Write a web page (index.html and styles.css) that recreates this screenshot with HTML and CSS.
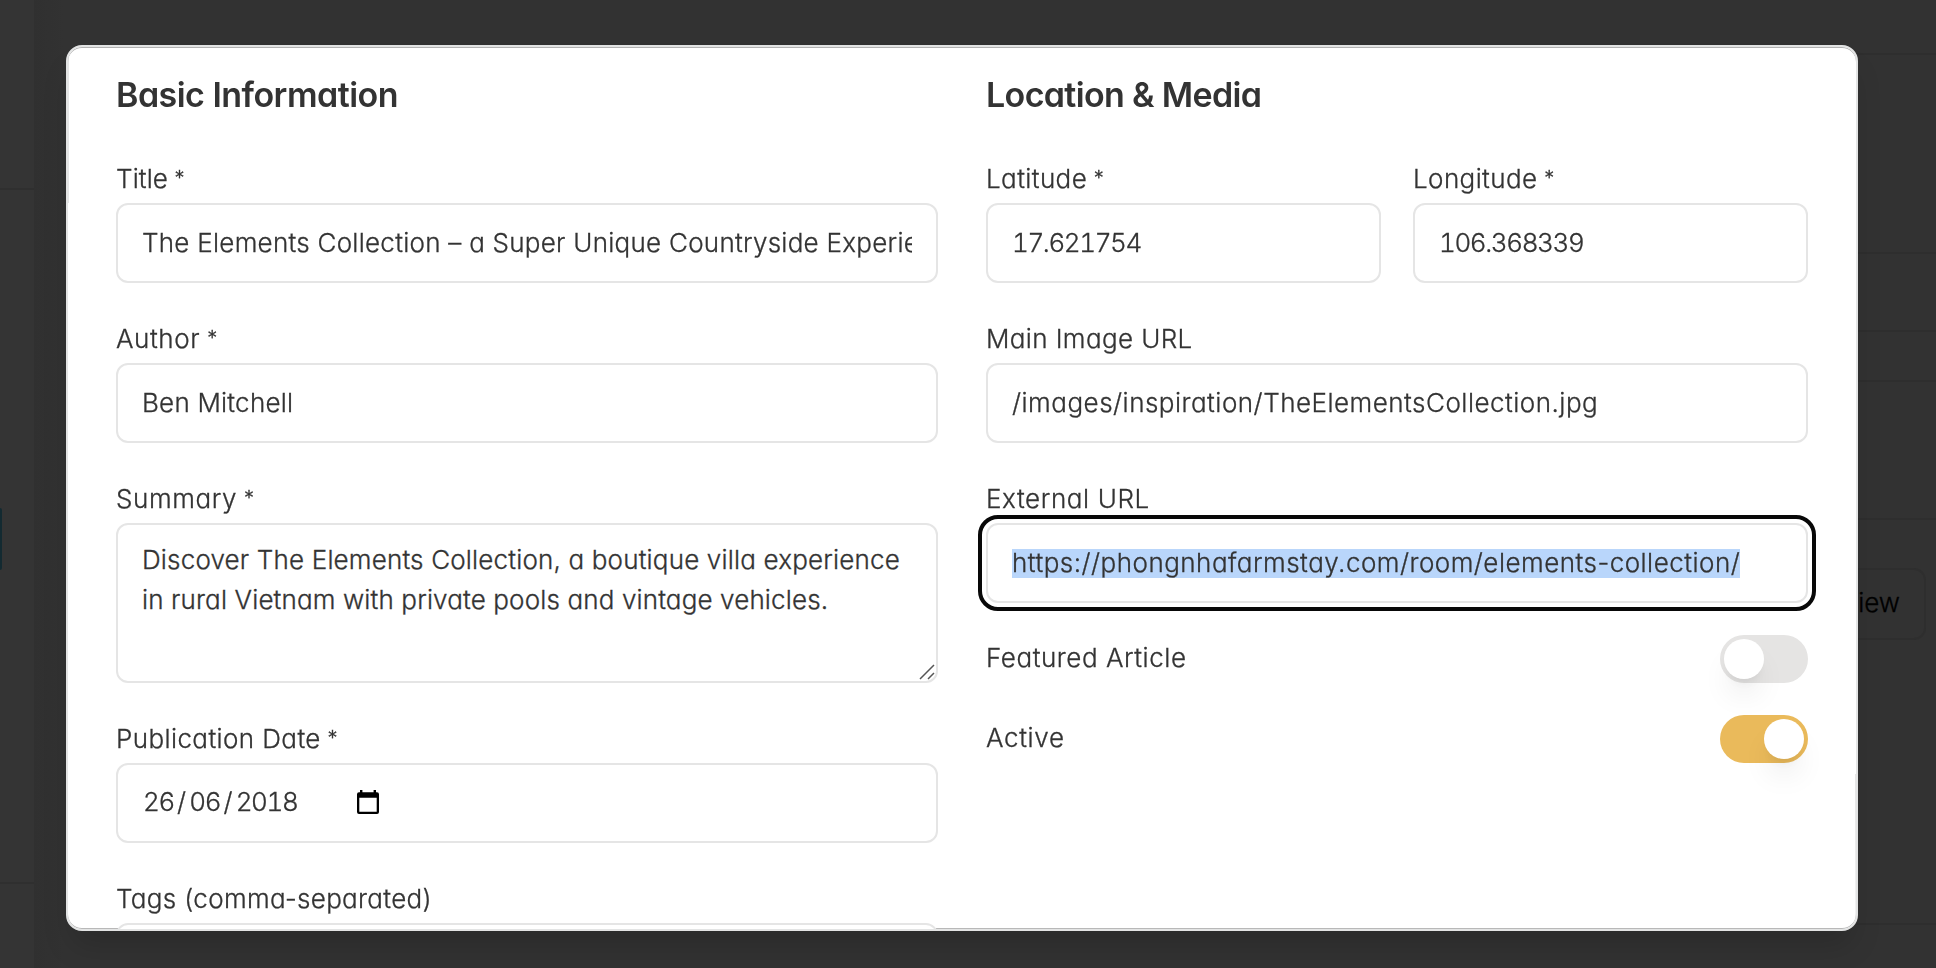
FILE: index.html
```html
<!DOCTYPE html>
<html lang="en">
<head>
<meta charset="utf-8">
<title>Edit article</title>
<link rel="stylesheet" href="styles.css">
</head>
<body>
<div class="page">
  <aside class="side">
    <div class="side-top"></div>
    <div class="side-nav"><div class="side-active"></div></div>
  </aside>
  <main class="main">
    <div class="row row-a"></div>
    <div class="row row-b"></div>
    <div class="row row-c"></div>
    <div class="row row-d"></div>
    <div class="row row-e"></div>
    <div class="row row-f"><div class="view-btn">View</div></div>
  </main>
</div>
<div class="overlay">
  <div class="modal">
    <section class="col">
      <h2 class="heading h-basic">Basic Information</h2>
      <div class="fields">
        <div class="field"><div class="label l-title">Title <span class="star">*</span></div><div class="input"><span class="clip v-title">The Elements Collection – a Super Unique Countryside Experience</span></div></div>
        <div class="field"><div class="label l-author">Author <span class="star">*</span></div><div class="input"><span class="clip v-author">Ben Mitchell</span></div></div>
        <div class="field"><div class="label l-summary">Summary <span class="star">*</span></div>
          <div class="input area"><span class="v-line1">Discover The Elements Collection, a boutique villa experience</span><span class="v-line2">in rural Vietnam with private pools and vintage vehicles.</span>
            <svg class="grip" width="16" height="16" viewBox="0 0 16 16"><path d="M1 15 15 1M9 15l6-6" stroke="#555" stroke-width="1.5" fill="none"/></svg>
          </div></div>
        <div class="field"><div class="label l-date">Publication Date <span class="star">*</span></div>
          <div class="input date"><span class="num">26</span><span class="sep">/</span><span class="num">06</span><span class="sep">/</span><span class="num">2018</span>
            <svg class="cal" width="22" height="24" viewBox="0 0 22 24"><path fill-rule="evenodd" d="M3 0h2.4v2.3h11.2V0H19v2.3h1q2 0 2 2V22q0 2-2 2H2q-2 0-2-2V4.3q0-2 2-2h1zM2.3 7.8v13.9h17.4V7.8z"/></svg>
          </div></div>
        <div class="field"><div class="label l-tags">Tags (comma-separated)</div><div class="input"></div></div>
      </div>
    </section>
    <section class="col">
      <h2 class="heading h-loc">Location &amp; Media</h2>
      <div class="fields">
        <div class="pair">
          <div class="field"><div class="label l-lat">Latitude <span class="star">*</span></div><div class="input"><span class="num">17.621754</span></div></div>
          <div class="field"><div class="label l-lat">Longitude <span class="star">*</span></div><div class="input"><span class="num">106.368339</span></div></div>
        </div>
        <div class="field"><div class="label l-image">Main Image URL</div><div class="input"><span class="clip v-image">/images/inspiration/TheElementsCollection.jpg</span></div></div>
        <div class="field"><div class="label l-url">External URL</div><div class="input focused"><span class="selected">https://phongnhafarmstay.com/room/elements-collection/</span></div></div>
      </div>
      <div class="switch-row"><span class="l-featured">Featured Article</span><div class="switch"><div class="thumb"></div></div></div>
      <div class="switch-row"><span class="l-active">Active</span><div class="switch on"><div class="thumb"></div></div></div>
    </section>
  </div>
</div>
</body>
</html>
```
FILE: styles.css
```css
* { box-sizing: border-box; }
body {
  margin: 0;
  height: 968px;
  overflow: hidden;
  background: #323232;
  color: #333;
  font: 300 26px/32px Inter, "Noto Sans", sans-serif;
  font-feature-settings: "cv11";
  -webkit-text-stroke: .3px currentColor;
}

/* dimmed page behind the dialog */
.page { display: flex; height: 968px; }
.side { width: 34px; background: #343434; }
.side-top { height: 190px; border-bottom: 2px solid #2f2f2f; }
.side-nav { height: 694px; padding-top: 318px; border-bottom: 2px solid #2f2f2f; }
.side-active { width: 2px; height: 62px; background: #132a31; border-radius: 0 2px 2px 0; }
.main { flex: 1; background: linear-gradient(90deg, #303030, #323232 30px); }
.row { width: 90px; margin-left: auto; border-bottom: 2px solid #2e2e2e; }
.row-a { height: 55px; }
.row-b { height: 199px; }
.row-c { height: 78px; }
.row-d { height: 50px; }
.row-e { height: 138px; }
.row-f { height: 405px; padding: 48px 10px 0 0; display: flex; justify-content: flex-end; align-items: flex-start; }
.view-btn { flex: none; width: 120px; height: 72px; padding: 17px 24px 0 0; text-align: right; border: 2px solid #2e2e2e; border-radius: 12px; color: #000; }

.overlay { position: fixed; inset: 0; padding: 45px 78px 0 66px; }
.modal {
  display: grid;
  grid-template-columns: 1fr 1fr;
  gap: 48px;
  height: 886px;
  padding: 27px 48px 0;
  overflow: hidden;
  border: 2px solid #e3e4e4;
  border-radius: 16px;
  background:
    linear-gradient(#e5e5e5, #e5e5e5) 0 0 / 1px 156px no-repeat,
    linear-gradient(#e5e5e5, #f4f4f4) 100% 727px / 1px 156px no-repeat,
    #fff;
  box-shadow: inset 0 1px 0 #b2b2b2, inset 0 -1px 0 #b8b8b8, 0 20px 30px -6px rgba(0, 0, 0, .15);
}
.col { min-width: 0; }
.heading { margin: 0 0 48px; height: 41px; padding-top: 1px; font-size: 34px; line-height: 40px; font-weight: 600; white-space: nowrap; -webkit-text-stroke: 0; }
.fields { display: flex; flex-direction: column; gap: 40px; }
.pair { display: grid; grid-template-columns: 1fr 1fr; gap: 32px; }
.label { height: 40px; white-space: nowrap; }
.star { font-size: 20px; line-height: 1; vertical-align: 3px; letter-spacing: 0; margin-left: -1px; }
.input {
  display: flex;
  align-items: center;
  height: 80px;
  padding: 0 24px;
  border: 2px solid #e5e5e5;
  border-radius: 12px;
  background: #fff;
  white-space: nowrap;
}
.clip { overflow: hidden; }
.area { position: relative; display: block; height: 160px; padding: 15px 24px; line-height: 40px; }
.area span { display: block; }
.grip { position: absolute; right: 1px; bottom: 1px; }
.num { font-feature-settings: "tnum"; letter-spacing: -1.4px; }
.date { padding: 0 25px 3px; }
.sep { width: 15.5px; text-align: center; }
.cal { margin: 1px 0 0 60px; }
.focused { outline: 4px solid #080808; outline-offset: 4px; }
.selected { width: 728px; height: 29px; line-height: 28px; background: #b9d6fb; letter-spacing: .48px; }

.switch-row { display: flex; align-items: center; justify-content: space-between; height: 48px; margin-top: 32px; }
.switch-row span { padding-bottom: 3px; }
.switch { display: flex; width: 88px; height: 48px; padding: 4px; border-radius: 24px; background: #e5e4e3; }
.switch.on { justify-content: flex-end; background: #eaba5b; }
.thumb { width: 40px; height: 40px; border-radius: 50%; background: #fff; box-shadow: 0 20px 30px -6px rgba(0, 0, 0, .1), 0 8px 12px -8px rgba(0, 0, 0, .12); }

/* per-string tracking */
.h-basic { letter-spacing: -.53px; }
.h-loc { letter-spacing: -.65px; }
.l-title { letter-spacing: .1px; }
.l-author { letter-spacing: .6px; }
.l-summary { letter-spacing: .6px; }
.l-date { letter-spacing: .4px; }
.l-tags { letter-spacing: .33px; }
.l-lat { letter-spacing: .4px; }
.l-image { letter-spacing: .38px; }
.l-url { letter-spacing: .6px; }
.l-featured { letter-spacing: .55px; }
.l-active { letter-spacing: .65px; }
.v-title { letter-spacing: .26px; }
.v-author { letter-spacing: .22px; }
.v-image { letter-spacing: .49px; }
.v-line1 { letter-spacing: .17px; }
.v-line2 { letter-spacing: .14px; }
```
